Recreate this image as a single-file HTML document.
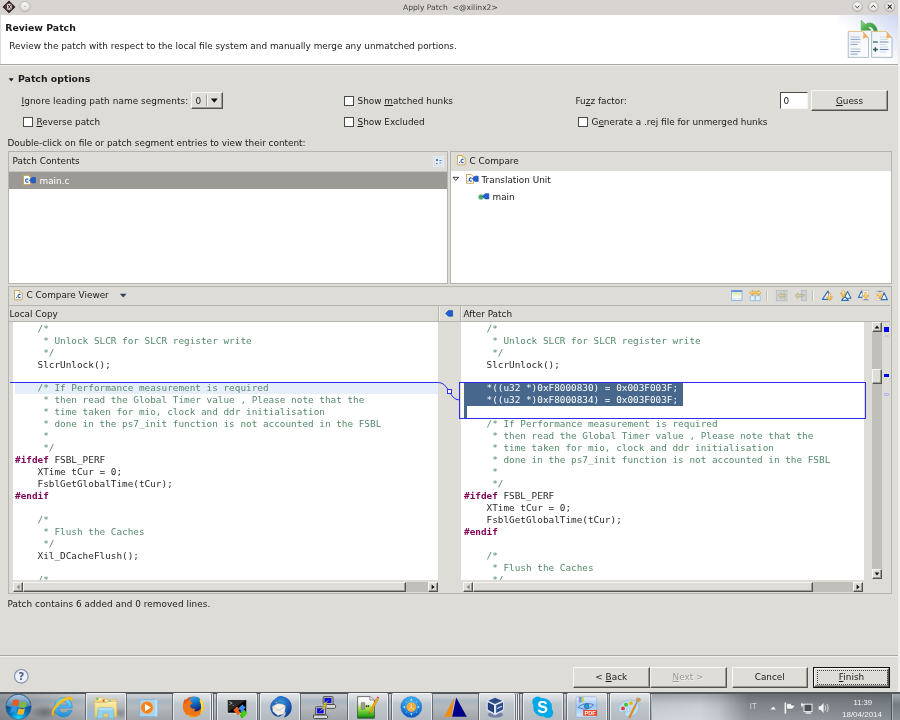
<!DOCTYPE html>
<html><head><meta charset="utf-8"><title>Apply Patch</title>
<style>
*{margin:0;padding:0;box-sizing:border-box}
html,body{width:900px;height:720px;overflow:hidden;background:#dedcd7}
body{position:relative;font-family:"DejaVu Sans","Liberation Sans",sans-serif;font-size:8.9px;color:#1a1a1a;line-height:11px}
.a{position:absolute;white-space:pre}
.b{font-weight:bold;font-size:9.35px}
u{text-decoration:underline;text-underline-offset:1px;text-decoration-thickness:1px}
.cb{position:absolute;width:9.5px;height:9.5px;background:#fff;border:1px solid #4a4a48}
.btn{position:absolute;height:20px;background:#dfddd8;border:1px solid;border-color:#f7f6f4 #55534e #55534e #f7f6f4;text-align:center;line-height:18px;box-shadow:inset -1px -1px 0 #9d9b95}
.pane{position:absolute;border:1px solid #b5b3ad;background:#dedcd7}
.code{position:absolute;font-family:"DejaVu Sans Mono","Liberation Mono",monospace;font-size:9.365px;line-height:11.965px;white-space:pre;color:#2a2a2a;overflow:hidden}
.c{color:#55896c}
.k{color:#7f0055;font-weight:bold}
.sel{background:#47688c;color:#fff;display:inline-block;height:11.965px;padding-right:4.6px}
.hl{position:absolute;background:#e6eefa}
.sbt{position:absolute;background:#c1bfba}
.sbb{position:absolute;background:#dedcd7;border:1px solid;border-color:#f7f6f4 #55534e #55534e #f7f6f4;box-shadow:inset -1px -1px 0 #9d9b95}
#root{position:absolute;left:0;top:0;width:900px;height:720px;will-change:transform;opacity:.999}
</style></head><body><div id="root">
<!-- title bar -->
<div class="a" id="tb" style="left:0;top:0;width:900px;height:15px;background:#d7d4d1"></div>
<div class="a" style="left:403px;top:2.5px;font-size:7.6px;color:#444;line-height:10px">Apply Patch  &lt;@xilinx2&gt;</div>
<!-- header -->
<div class="a" style="left:1px;top:15px;width:897px;height:49px;background:#fff"></div>
<div class="a" style="left:0;top:64px;width:900px;height:1px;background:#a9a7a2"></div>
<div class="a" style="left:0;top:65px;width:900px;height:1px;background:#f0efec"></div>
<div class="a b" style="left:5.2px;top:22.2px">Review Patch</div>
<div class="a" style="left:9.3px;top:41px">Review the patch with respect to the local file system and manually merge any unmatched portions.</div>
<!-- options -->
<div class="a b" style="left:18px;top:73.2px">Patch options</div>
<div class="a" style="left:21.5px;top:96px;letter-spacing:.08px"><u>I</u>gnore leading path name segments:</div>
<div class="cb" style="left:23px;top:117px"></div>
<div class="a" style="left:36.5px;top:117px"><u>R</u>everse patch</div>
<div class="cb" style="left:344px;top:96px"></div>
<div class="a" style="left:357.5px;top:96px">Show <u>m</u>atched hunks</div>
<div class="cb" style="left:344px;top:117px"></div>
<div class="a" style="left:357.5px;top:117px"><u>S</u>how Excluded</div>
<div class="a" style="left:575.5px;top:96px">Fu<u>z</u>z factor:</div>
<div class="cb" style="left:578px;top:117px"></div>
<div class="a" style="left:591.5px;top:117px">G<u>e</u>nerate a .rej file for unmerged hunks</div>
<div class="a" style="left:7.5px;top:138px">Double-click on file or patch segment entries to view their content:</div>
<!-- widgets -->
<svg class="a" style="left:8px;top:76.5px" width="7" height="6" viewBox="0 0 7 6"><path d="M0.7 1.2H5.7L3.2 4.6Z" fill="#1a1a1a"/></svg>
<div class="btn" style="left:191px;top:91.5px;width:31.5px;height:17.5px"></div>
<div class="a" style="left:195.5px;top:96px">0</div>
<div class="a" style="left:206px;top:95px;width:1px;height:11px;background:#a9a7a2"></div>
<div class="a" style="left:207px;top:95px;width:1px;height:11px;background:#f7f6f4"></div>
<svg class="a" style="left:210px;top:98px" width="9" height="6" viewBox="0 0 9 6"><path d="M0.8 0.6H7.8L4.3 4.8Z" fill="#111"/></svg>
<div class="a" style="left:780px;top:92px;width:28px;height:17px;background:#fff;border:1px solid;border-color:#4a4946 #f7f6f4 #f7f6f4 #4a4946"></div>
<div class="a" style="left:783.5px;top:96px">0</div>
<div class="btn" style="left:811px;top:90px;width:77px;height:21px;line-height:20px"><u>G</u>uess</div>
<!-- panes -->
<div class="pane" style="left:8px;top:151px;width:440px;height:133px"></div>
<div class="a" style="left:9px;top:171px;width:438px;height:1px;background:#c5c3be"></div>
<div class="a" style="left:9px;top:171.6px;width:438px;height:17.8px;background:#9c9a94"></div>
<div class="a" style="left:9px;top:189.4px;width:438px;height:93.6px;background:#fff"></div>
<div class="a" style="left:12.5px;top:156px">Patch Contents</div>
<div class="a" style="left:39.5px;top:176px;color:#fff">main.c</div>
<div class="pane" style="left:450px;top:151px;width:441.8px;height:133px"></div>
<div class="a" style="left:451px;top:171px;width:439.8px;height:112px;background:#fff"></div>
<div class="a" style="left:469.5px;top:156px">C Compare</div>
<div class="a" style="left:481.5px;top:175px">Translation Unit</div>
<div class="a" style="left:492.5px;top:192px">main</div>
<!-- title bar icons + header banner -->
<svg class="a" style="left:0;top:0" width="900" height="66" viewBox="0 0 900 66">
<defs>
<radialGradient id="tbtn" cx="0.5" cy="0.3" r="0.75"><stop offset="0" stop-color="#f8f7f6"/><stop offset="0.65" stop-color="#e4e2e0"/><stop offset="1" stop-color="#b4b1ae"/></radialGradient>
<linearGradient id="ban" x1="0" y1="1" x2="1" y2="0"><stop offset="0" stop-color="#e8ecf8" stop-opacity="0"/><stop offset="0.4" stop-color="#e8ecf8" stop-opacity="0"/><stop offset="0.7" stop-color="#e4e9f7" stop-opacity=".85"/><stop offset="1" stop-color="#cbd5ef"/></linearGradient>
<linearGradient id="garrow" x1="0" y1="0" x2="1" y2="1"><stop offset="0" stop-color="#9fdc9a"/><stop offset="0.5" stop-color="#4cae4c"/><stop offset="1" stop-color="#2f8a34"/></linearGradient>
<linearGradient id="pg" x1="0" y1="0" x2="1" y2="1"><stop offset="0" stop-color="#eef2f8"/><stop offset="1" stop-color="#fdfdfe"/></linearGradient>
</defs>
<!-- app icon -->
<path d="M9 1.3L14.6 6.9L9 12.5L3.4 6.9Z" fill="#a81616" stroke="#1a1a1a" stroke-width="1.1"/>
<circle cx="9" cy="6.9" r="3.3" fill="#f0f0f0" stroke="#1a1a1a" stroke-width="0.6"/>
<path d="M6.6 5V8.6M8.2 5L10.6 8.6M10.6 5L8.2 8.6M11.6 6.8H12.4" stroke="#111" stroke-width="0.9" fill="none"/>
<!-- title buttons -->
<circle cx="25" cy="6.5" r="5.2" fill="url(#tbtn)" stroke="#aeaba8" stroke-width="0.7"/>
<path d="M24 6.3H26" stroke="#b0adaa" stroke-width="0.8"/>
<circle cx="857.3" cy="6.7" r="5" fill="url(#tbtn)" stroke="#a8a5a2" stroke-width="0.7"/>
<path d="M855.2 5.8L857.3 7.8L859.4 5.8" stroke="#3a3a3a" stroke-width="1" fill="none"/>
<circle cx="873.3" cy="6.7" r="5" fill="url(#tbtn)" stroke="#a8a5a2" stroke-width="0.7"/>
<path d="M871.2 7.4L873.3 5.4L875.4 7.4" stroke="#3a3a3a" stroke-width="1" fill="none"/>
<circle cx="889.7" cy="6.7" r="5" fill="url(#tbtn)" stroke="#a8a5a2" stroke-width="0.7"/>
<path d="M887.7 4.7L891.7 8.7M891.7 4.7L887.7 8.7" stroke="#2a2a2a" stroke-width="1.1" fill="none"/>
<!-- banner gradient -->
<rect x="838" y="15" width="60" height="49" fill="url(#ban)"/>
<!-- left page -->
<path d="M848.2 31.5H863L868.6 38V57.4H848.2Z" fill="url(#pg)" stroke="#8aa4a6" stroke-width="0.7"/>
<path d="M848.2 31.4H863" stroke="#f2c48c" stroke-width="1"/>
<path d="M863 31.4C863.6 34 863.4 36.6 862.6 38.6C864.6 37.6 866.8 37.4 868.6 38Z" fill="#f4b058"/>
<path d="M850.6 37H860.4M850.6 42H860.4M850.6 49H860.4" stroke="#b4c0d8" stroke-width="1"/>
<path d="M850.6 39.4H860.4M850.6 44.4H857.6M850.6 51.6H860.4M850.6 54.2H857.6" stroke="#7f98c8" stroke-width="0.9"/>
<!-- right page -->
<path d="M871.6 31.5H886.4L892 38V57.4H871.6Z" fill="url(#pg)" stroke="#8aa4a6" stroke-width="0.7"/>
<path d="M871.6 31.4H886.4" stroke="#f2c48c" stroke-width="1"/>
<path d="M886.4 31.4C887 34 886.8 36.6 886 38.6C888 37.6 890.2 37.4 892 38Z" fill="#f4b058"/>
<path d="M873 42H877.8" stroke="#4c8484" stroke-width="1.6"/>
<path d="M873 49.5H877.8M875.4 47.2V51.8" stroke="#2c5c5e" stroke-width="1.5"/>
<path d="M879.8 37H886M879.8 39.5H888M879.8 44.5H886M879.8 47H888M879.8 52H886" stroke="#cdd6e6" stroke-width="0.9"/>
<path d="M879.8 42H888.4" stroke="#8fa2c8" stroke-width="1.3"/>
<path d="M879.8 49.5H888.4" stroke="#5c7cb4" stroke-width="1.1"/>
<!-- green arrow -->
<path d="M861.2 20.2L865.4 24.4C869.6 21.6 875.6 22.6 877.4 30.8H874C873 27.4 870.4 26.2 867.8 27L871 30.2H861.2Z" fill="url(#garrow)" stroke="#3c9a40" stroke-width="0.5"/>
</svg>
<!-- compare viewer -->
<div class="pane" style="left:8px;top:286px;width:883.8px;height:308px"></div>
<div class="a" style="left:9px;top:305px;width:881px;height:1px;background:#b5b3ad"></div>
<div class="a" style="left:9px;top:321px;width:881px;height:1px;background:#b5b3ad"></div>
<div class="a" style="left:26.5px;top:290px">C Compare Viewer</div>
<div class="a" style="left:9.5px;top:309px">Local Copy</div>
<div class="a" style="left:463.5px;top:309px">After Patch</div>
<div class="a" style="left:13px;top:322px;width:425px;height:258px;background:#fff"></div>
<div class="a" style="left:461px;top:322px;width:403px;height:258px;background:#fff"></div>
<div class="hl" style="left:15px;top:383px;width:423px;height:11px"></div>
<div class="code" style="left:15px;top:322.6px;width:423px;height:257.4px"><span class="c">    /*</span>
<span class="c">     * Unlock SLCR for SLCR register write</span>
<span class="c">     */</span>
    SlcrUnlock();

<span class="c">    /* If Performance measurement is required</span>
<span class="c">     * then read the Global Timer value , Please note that the</span>
<span class="c">     * time taken for mio, clock and ddr initialisation</span>
<span class="c">     * done in the ps7_init function is not accounted in the FSBL</span>
<span class="c">     *</span>
<span class="c">     */</span>
<span class="k">#ifdef</span> FSBL_PERF
    XTime tCur = 0;
    FsblGetGlobalTime(tCur);
<span class="k">#endif</span>

<span class="c">    /*</span>
<span class="c">     * Flush the Caches</span>
<span class="c">     */</span>
    Xil_DCacheFlush();

<span class="c">    /*</span></div>
<div class="code" style="left:464px;top:322.6px;width:400px;height:257.4px"><span class="c">    /*</span>
<span class="c">     * Unlock SLCR for SLCR register write</span>
<span class="c">     */</span>
    SlcrUnlock();

<span class="sel">    *((u32 *)0xF8000830) = 0x003F003F;</span>
<span class="sel">    *((u32 *)0xF8000834) = 0x003F003F;</span>

<span class="c">    /* If Performance measurement is required</span>
<span class="c">     * then read the Global Timer value , Please note that the</span>
<span class="c">     * time taken for mio, clock and ddr initialisation</span>
<span class="c">     * done in the ps7_init function is not accounted in the FSBL</span>
<span class="c">     *</span>
<span class="c">     */</span>
<span class="k">#ifdef</span> FSBL_PERF
    XTime tCur = 0;
    FsblGetGlobalTime(tCur);
<span class="k">#endif</span>

<span class="c">    /*</span>
<span class="c">     * Flush the Caches</span>
<span class="c">     */</span></div>
<div class="a" style="left:464px;top:406px;width:3px;height:12px;background:#47688c"></div>
<svg class="a" style="left:0;top:370px" width="900" height="60" viewBox="0 370 900 60" fill="none" stroke="#2a2af0" stroke-width="1">
<path d="M10 382.5H438.5C449 382.5 449 400 459.5 400"/>
<rect x="459.5" y="382.5" width="406" height="36"/>
<rect x="447.5" y="389.5" width="4" height="4" fill="#fff"/>
</svg>
<!-- scrollbars -->
<div class="sbt" style="left:871.5px;top:322px;width:10px;height:257px"></div>
<div class="sbb" style="left:871.5px;top:322px;width:10px;height:10px"></div>
<div class="sbb" style="left:871.5px;top:569px;width:10px;height:10px"></div>
<div class="sbb" style="left:871.5px;top:369px;width:10px;height:15px"></div>
<div class="sbt" style="left:13px;top:582px;width:425px;height:10px"></div>
<div class="sbb" style="left:13px;top:582px;width:10px;height:10px"></div>
<div class="sbb" style="left:428px;top:582px;width:10px;height:10px"></div>
<div class="sbb" style="left:23px;top:582px;width:383px;height:10px"></div>
<div class="sbt" style="left:463px;top:582px;width:400px;height:10px"></div>
<div class="sbb" style="left:463px;top:582px;width:10px;height:10px"></div>
<div class="sbb" style="left:853px;top:582px;width:10px;height:10px"></div>
<div class="sbb" style="left:473px;top:582px;width:340px;height:10px"></div>
<!-- scroll arrows -->
<svg class="a" style="left:0;top:320px" width="900" height="275" viewBox="0 320 900 275">
<path d="M874.6 328.6L877 325.6L879.4 328.6Z" fill="#111"/>
<path d="M874.6 572.6L877 575.6L879.4 572.6Z" fill="#111"/>
<path d="M19.6 584.6L16.6 587L19.6 589.4Z" fill="#8a8883"/>
<path d="M431.6 584.6L434.6 587L431.6 589.4Z" fill="#111"/>
<path d="M469.6 584.6L466.6 587L469.6 589.4Z" fill="#8a8883"/>
<path d="M856.6 584.6L859.6 587L856.6 589.4Z" fill="#111"/>
<path d="M884.5 336H889" stroke="#c9c7c2" stroke-width="1.6"/>
</svg>
<div class="a" style="left:438px;top:306px;width:1px;height:15px;background:#b5b3ad"></div>
<div class="a" style="left:460px;top:306px;width:1px;height:15px;background:#b5b3ad"></div>
<div class="a" style="left:439px;top:306px;width:1px;height:15px;background:#f0efec"></div>
<div class="a" style="left:461px;top:306px;width:1px;height:15px;background:#f0efec"></div>
<!-- overview -->
<div class="a" style="left:884px;top:327px;width:5px;height:5px;background:#0000ff"></div>
<div class="a" style="left:884px;top:374px;width:5px;height:3px;background:#0000ff"></div>
<div class="a" style="left:884px;top:393px;width:5px;height:3px;background:#d8d8ff;border:1px solid #b0b0f0;border-radius:1px"></div>
<div class="a" style="left:7.5px;top:599px;letter-spacing:.058px">Patch contains 6 added and 0 removed lines.</div>
<!-- small icons -->
<!-- main.c icon (left pane) -->
<svg class="a" style="left:23px;top:175px" width="13" height="11" viewBox="0 0 13 11">
<path d="M0.5 0.5H5.5L7.5 2.5V9.5H0.5Z" fill="#fdfdfb" stroke="#c9a95c" stroke-width="1"/>
<path d="M5.3 4.4C4.3 3.5 2.6 4 2.6 5.6C2.6 7.2 4.3 7.6 5.3 6.8" fill="none" stroke="#3b6fb5" stroke-width="1.3"/>
<path d="M6.3 5.2L9 2.6H12.3V7.8H9Z" fill="#1f5fd8" stroke="#123c9a" stroke-width="0.6"/>
</svg>
<!-- header icon left pane -->
<svg class="a" style="left:433px;top:156px" width="11" height="11" viewBox="0 0 11 11">
<rect x="0.5" y="0.5" width="10" height="10" fill="#e4ecf8" stroke="#f8f8f6"/>
<rect x="1" y="1" width="9" height="9" fill="none" stroke="#b8c4d8" stroke-width="0.5"/>
<path d="M3 3L5 5M5 3L3 5M6.5 4.5H8.5M3 7.5H4.5M6.5 7H8" stroke="#4a6aa8" stroke-width="0.9"/>
</svg>
<!-- C Compare icon -->
<svg class="a" style="left:457px;top:155px" width="9" height="11" viewBox="0 0 9 11">
<path d="M0.5 0.5H5.5L8.2 3V9.8H0.5Z" fill="#fdfdfb" stroke="#c9a95c" stroke-width="1"/>
<path d="M5.5 0.5V3H8.2" fill="#f0dca8" stroke="#c9a95c" stroke-width="0.6"/>
<rect x="2" y="7" width="1" height="1" fill="#3b6fb5"/>
<path d="M6.5 4.8C5.6 4 4 4.4 4 6C4 7.6 5.6 8 6.5 7.2" fill="none" stroke="#2a5db0" stroke-width="1.2"/>
</svg>
<!-- tree expander -->
<svg class="a" style="left:452px;top:176px" width="8" height="6" viewBox="0 0 8 6">
<path d="M1 1.3H6.6L3.8 4.5Z" fill="#fff" stroke="#2a2a2a" stroke-width="0.9"/>
</svg>
<!-- translation unit icon -->
<svg class="a" style="left:466px;top:174px" width="13" height="11" viewBox="0 0 13 11">
<path d="M0.5 0.5H5.2L7.5 2.6V9.3H0.5Z" fill="#fdfdfb" stroke="#c9a95c" stroke-width="1"/>
<rect x="1.6" y="6.6" width="1" height="1" fill="#3b6fb5"/>
<path d="M5.6 4.4C4.8 3.6 3.2 4 3.2 5.6C3.2 7.2 4.8 7.5 5.6 6.8" fill="none" stroke="#2a5db0" stroke-width="1.2"/>
<path d="M6.3 4.8L8.8 2.2H12.2V7.4H8.8Z" fill="#1f5fd8" stroke="#123c9a" stroke-width="0.6"/>
</svg>
<!-- main icon -->
<svg class="a" style="left:478px;top:193px" width="12" height="8" viewBox="0 0 12 8">
<circle cx="3" cy="4" r="2.5" fill="#4fa66a" stroke="#7fc494" stroke-width="0.6"/>
<path d="M4.6 3.3L7.2 0.7H10.8V5.9H7.2Z" fill="#1f5fd8" stroke="#123c9a" stroke-width="0.6"/>
</svg>
<!-- viewer title icon -->
<svg class="a" style="left:14px;top:290px" width="9" height="11" viewBox="0 0 9 11">
<path d="M0.5 0.5H5.5L8.2 3V9.8H0.5Z" fill="#fdfdfb" stroke="#c9a95c" stroke-width="1"/>
<path d="M5.5 0.5V3H8.2" fill="#f0dca8" stroke="#c9a95c" stroke-width="0.6"/>
<rect x="2" y="7" width="1" height="1" fill="#3b6fb5"/>
<path d="M6.5 4.8C5.6 4 4 4.4 4 6C4 7.6 5.6 8 6.5 7.2" fill="none" stroke="#2a5db0" stroke-width="1.2"/>
</svg>
<!-- viewer dropdown arrow -->
<svg class="a" style="left:119px;top:293px" width="9" height="6" viewBox="0 0 9 6"><path d="M0.8 0.8H7.6L4.2 4.6Z" fill="#33415e"/></svg>
<!-- center arrow -->
<svg class="a" style="left:445px;top:310px" width="9" height="8" viewBox="0 0 9 8">
<path d="M0.6 3.4L3.4 0.6H7.6V6.2H3.4Z" fill="#1f5fd8" stroke="#123c9a" stroke-width="0.6"/>
</svg>
<!-- viewer toolbar icons -->
<svg class="a" style="left:725px;top:286px" width="166" height="19" viewBox="725 286 166 19">
<defs>
<linearGradient id="gy" x1="0" y1="0" x2="0" y2="1"><stop offset="0" stop-color="#fff2c8"/><stop offset="1" stop-color="#f0b03a"/></linearGradient>
<linearGradient id="gg" x1="0" y1="0" x2="0" y2="1"><stop offset="0" stop-color="#d8eaa0"/><stop offset="1" stop-color="#f8fbe8"/></linearGradient>
</defs>
<!-- 1 window layout -->
<rect x="731.5" y="290.5" width="10.5" height="10" fill="#f4f8fc" stroke="#93b2dc" stroke-width="0.9"/>
<rect x="731.5" y="290.3" width="10.5" height="1.8" fill="#5d92d2"/>
<rect x="732.6" y="292.6" width="8.4" height="4.6" fill="url(#gg)"/>
<path d="M732.8 299H736.2M737.6 299H741" stroke="#b9d3ee" stroke-width="1.2"/>
<!-- 2 two panes with double arrow -->
<rect x="750.3" y="295.8" width="4.6" height="4.8" fill="#e4f2fb" stroke="#9cbfe4" stroke-width="0.9"/>
<rect x="755.6" y="295.8" width="4.6" height="4.8" fill="#e4f2fb" stroke="#9cbfe4" stroke-width="0.9"/>
<path d="M749.6 292.8L752.6 290.2V291.8H758V290.2L761 292.8L758 295.4V293.8H752.6V295.4Z" fill="url(#gy)" stroke="#d9962a" stroke-width="0.7"/>
<!-- sep -->
<path d="M767.5 290.5V301" stroke="#f5f4f1" stroke-width="1"/><path d="M766.6 290.5V301" stroke="#bab8b2" stroke-width="0.8"/>
<!-- 3 disabled copy all -->
<rect x="776.3" y="290.5" width="10.6" height="10.2" fill="#cfd3d2" stroke="#b4bac0" stroke-width="0.8"/>
<rect x="783.6" y="290.5" width="1.4" height="10.2" fill="#b7c9a6"/>
<path d="M778 295.6L781 292.8V294.4H785.2V296.8H781V298.4Z" fill="#d8ccb0" stroke="#b3a684" stroke-width="0.7"/>
<!-- 4 disabled copy current -->
<rect x="801.6" y="290.5" width="4.6" height="10.2" fill="#cdd2d8" stroke="#b4bac0" stroke-width="0.8"/>
<rect x="803.6" y="294.6" width="1.4" height="1.6" fill="#a8c094"/>
<path d="M795 295.6L798 292.8V294.4H803V296.8H798V298.4Z" fill="#d8ccb0" stroke="#b3a684" stroke-width="0.7"/>
<!-- sep -->
<path d="M813.3 290.5V301" stroke="#f5f4f1" stroke-width="1"/><path d="M812.4 290.5V301" stroke="#bab8b2" stroke-width="0.8"/>
<!-- 5 next difference -->
<path d="M828 291.2L822.4 299.4H830.6Z" fill="#eef4fb" stroke="#2f6fb8" stroke-width="1.2" stroke-linejoin="round"/>
<path d="M828.4 293.4H830.6V297H832.6L829.5 300.8L826.2 297H828.4Z" fill="url(#gy)" stroke="#d9962a" stroke-width="0.6"/>
<!-- 6 prev difference -->
<path d="M847.6 291.6L844 298.2H851Z" fill="#eef4fb" stroke="#2f6fb8" stroke-width="1.1" stroke-linejoin="round"/>
<path d="M844.8 296.4L841.6 300.4H848.4Z" fill="#eef4fb" stroke="#2f6fb8" stroke-width="1.1" stroke-linejoin="round"/>
<path d="M842.2 297.2V293.8H840.3L843.3 290.1L846.4 293.8H844.5V297.2Z" fill="url(#gy)" stroke="#d9962a" stroke-width="0.6"/>
<!-- 7 next change -->
<path d="M861.6 291L858.4 297.4H864.4Z" fill="#eef4fb" stroke="#2f6fb8" stroke-width="1.1" stroke-linejoin="round"/>
<rect x="862.8" y="290.4" width="6" height="10.2" fill="#f8f8f6" stroke="#c8c0a8" stroke-width="0.7"/>
<path d="M863.4 299.6H868.2" stroke="#5c8fd0" stroke-width="1"/>
<path d="M864.7 292.4H866.9V295.6H868.8L865.8 299.2L862.7 295.6H864.7Z" fill="url(#gy)" stroke="#d9962a" stroke-width="0.6"/>
<!-- 8 prev change -->
<rect x="877" y="290.4" width="6" height="10.2" fill="#f8f8f6" stroke="#c8c0a8" stroke-width="0.7"/>
<path d="M877.6 291.6H882.4" stroke="#5c8fd0" stroke-width="1"/>
<path d="M884 292.8L881.2 299.6H887.4Z" fill="#eef4fb" stroke="#2f6fb8" stroke-width="1.1" stroke-linejoin="round"/>
<path d="M878.8 299V295.6H876.9L879.9 291.9L883 295.6H881V299Z" fill="url(#gy)" stroke="#d9962a" stroke-width="0.6"/>
</svg>
<!-- bottom -->
<div class="a" style="left:0;top:655px;width:900px;height:1px;background:#a9a7a2"></div>
<div class="a" style="left:0;top:656px;width:900px;height:1px;background:#f3f2ef"></div>
<svg class="a" style="left:13px;top:668px" width="17" height="17" viewBox="0 0 17 17"><circle cx="8.3" cy="8.3" r="6.8" fill="#eef0f5" stroke="#7f90b4" stroke-width="1.1"/><text x="8.3" y="12" font-family="DejaVu Sans, Liberation Sans, sans-serif" font-weight="bold" font-size="10.5" text-anchor="middle" fill="#4c6294">?</text></svg>
<div class="btn" style="left:573px;top:667px;width:76.5px;height:20.5px;line-height:19px">&lt; <u>B</u>ack</div>
<div class="btn" style="left:649.5px;top:667px;width:77px;height:20.5px;line-height:19px;color:#9d9b96;text-shadow:0.7px 0.7px 0 #f4f3f1"><u>N</u>ext &gt;</div>
<div class="btn" style="left:731.5px;top:667px;width:76.5px;height:20.5px;line-height:19px">Cancel</div>
<div class="a" style="left:813px;top:667px;width:77px;height:20.5px;background:#111"></div>
<div class="btn" style="left:814px;top:668px;width:75px;height:18.5px;line-height:17px"><u>F</u>inish</div>
<div class="a" style="left:816.5px;top:669.8px;width:71px;height:15px;border:1px dotted #444"></div>
<div class="a" style="left:898.4px;top:0;width:1.6px;height:693px;background:#eeedeb"></div>
<!-- taskbar -->
<div class="a" id="task" style="left:0;top:692px;width:900px;height:28px;background:linear-gradient(#8a8c8c 0,#54585c .5px,#54585c 1.5px,#cdd0d3 1.7px,#c4c8cc 5px,#a9b7c2 8.5px,#adb7bf 11px,#b6babe 15px,#abafb3 21px,#9fa3a7 28px)"></div>
<div class="a" style="left:0;top:694px;width:86px;height:26px;background:linear-gradient(90deg,rgba(80,82,86,.42),rgba(80,82,86,.25) 45%,rgba(80,82,86,.0))"></div>
<div class="a" style="left:652px;top:694px;width:239px;height:26px;background:linear-gradient(rgba(0,0,0,.2),rgba(0,0,0,.04) 40%,rgba(0,0,0,0) 60%,rgba(255,255,255,.12)),linear-gradient(90deg,#c6ccd2 0,#ccd2d8 20%,#bcc2c8 28%,#858b91 40%,#7d8389 100%)"></div>
<div class="a" style="left:30px;top:705px;width:30px;height:14px;border-radius:50%;background:radial-gradient(closest-side,rgba(40,40,40,.38),rgba(40,40,40,0))"></div>
<div class="a" style="left:891px;top:694px;width:9px;height:26px;background:linear-gradient(#a4acb2,#757d83 40%,#8a9298);border-left:1px solid #4e565c;box-shadow:inset 1px 0 0 rgba(255,255,255,.35)"></div>
<div class="a" style="left:84.5px;top:693.4px;width:42.0px;height:29px;border:1px solid rgba(80,86,92,.8);border-top:0;border-radius:2px;background:radial-gradient(ellipse 9px 7px at 15% 75%,rgba(120,190,240,.55),rgba(120,190,240,0)),radial-gradient(ellipse 8px 6px at 86% 72%,rgba(60,60,60,.35),rgba(60,60,60,0)),linear-gradient(#dfe1e3,#c8ccd0 22%,#b4b9be 45%,#a9aeb3 100%);box-shadow:inset 0 0 0 1px rgba(255,255,255,.65)"></div>
<div class="a" style="left:172.0px;top:693.4px;width:42.0px;height:29px;border:1px solid rgba(80,86,92,.8);border-top:0;border-radius:2px;background:#c8cdd2;box-shadow:inset 0 0 0 1px rgba(255,255,255,.65)"></div>
<div class="a" style="left:172.0px;top:693.4px;width:40.0px;height:29px;border:1px solid rgba(80,86,92,.8);border-top:0;border-radius:2px;background:linear-gradient(#e6e8ea,#d6dade 20%,#c0c8cf 38%,#bcc3c9 60%,#b4babf 100%);box-shadow:inset 0 0 0 1px rgba(255,255,255,.65)"></div>
<div class="a" style="left:215.7px;top:693.4px;width:42.0px;height:29px;border:1px solid rgba(80,86,92,.8);border-top:0;border-radius:2px;background:linear-gradient(#e6e8ea,#d6dade 20%,#c0c8cf 38%,#bcc3c9 60%,#b4babf 100%);box-shadow:inset 0 0 0 1px rgba(255,255,255,.65)"></div>
<div class="a" style="left:259.4px;top:693.4px;width:42.0px;height:29px;border:1px solid rgba(80,86,92,.8);border-top:0;border-radius:2px;background:linear-gradient(#e6e8ea,#d6dade 20%,#c0c8cf 38%,#bcc3c9 60%,#b4babf 100%);box-shadow:inset 0 0 0 1px rgba(255,255,255,.65)"></div>
<div class="a" style="left:346.9px;top:693.4px;width:42.0px;height:29px;border:1px solid rgba(80,86,92,.8);border-top:0;border-radius:2px;background:linear-gradient(#e6e8ea,#d6dade 20%,#c0c8cf 38%,#bcc3c9 60%,#b4babf 100%);box-shadow:inset 0 0 0 1px rgba(255,255,255,.65)"></div>
<div class="a" style="left:390.6px;top:693.4px;width:42.0px;height:29px;border:1px solid rgba(80,86,92,.8);border-top:0;border-radius:2px;background:linear-gradient(#e6e8ea,#d6dade 20%,#c0c8cf 38%,#bcc3c9 60%,#b4babf 100%);box-shadow:inset 0 0 0 1px rgba(255,255,255,.65)"></div>
<div class="a" style="left:478.1px;top:693.4px;width:42.0px;height:29px;border:1px solid rgba(80,86,92,.8);border-top:0;border-radius:2px;background:#c8cdd2;box-shadow:inset 0 0 0 1px rgba(255,255,255,.65)"></div>
<div class="a" style="left:478.1px;top:693.4px;width:40.0px;height:29px;border:1px solid rgba(80,86,92,.8);border-top:0;border-radius:2px;background:#c8cdd2;box-shadow:inset 0 0 0 1px rgba(255,255,255,.65)"></div>
<div class="a" style="left:478.1px;top:693.4px;width:38.0px;height:29px;border:1px solid rgba(80,86,92,.8);border-top:0;border-radius:2px;background:linear-gradient(#e6e8ea,#d6dade 20%,#c0c8cf 38%,#bcc3c9 60%,#b4babf 100%);box-shadow:inset 0 0 0 1px rgba(255,255,255,.65)"></div>
<div class="a" style="left:521.8px;top:693.4px;width:42.0px;height:29px;border:1px solid rgba(80,86,92,.8);border-top:0;border-radius:2px;background:linear-gradient(#e6e8ea,#d6dade 20%,#c0c8cf 38%,#bcc3c9 60%,#b4babf 100%);box-shadow:inset 0 0 0 1px rgba(255,255,255,.65)"></div>
<div class="a" style="left:565.5px;top:693.4px;width:42.0px;height:29px;border:1px solid rgba(80,86,92,.8);border-top:0;border-radius:2px;background:linear-gradient(#e6e8ea,#d6dade 20%,#c0c8cf 38%,#bcc3c9 60%,#b4babf 100%);box-shadow:inset 0 0 0 1px rgba(255,255,255,.65)"></div>
<div class="a" style="left:609.3px;top:693.4px;width:42.0px;height:29px;border:1px solid rgba(80,86,92,.8);border-top:0;border-radius:2px;background:linear-gradient(#e6e8ea,#d6dade 20%,#c0c8cf 38%,#bcc3c9 60%,#b4babf 100%);box-shadow:inset 0 0 0 1px rgba(255,255,255,.65)"></div>
<svg class="a" style="left:0;top:692px" width="900" height="28" viewBox="0 692 900 28">
<defs>
<radialGradient id="orb" cx="0.5" cy="0.95" r="0.9"><stop offset="0" stop-color="#18e0ff"/><stop offset="0.35" stop-color="#0b7fc4"/><stop offset="0.7" stop-color="#0a4f8c"/><stop offset="1" stop-color="#2a5f92"/></radialGradient>
<linearGradient id="orbg" x1="0" y1="0" x2="0" y2="1"><stop offset="0" stop-color="#c8dcee" stop-opacity=".85"/><stop offset="1" stop-color="#7fa6cc" stop-opacity=".55"/></linearGradient>
<linearGradient id="ieb" x1="0" y1="0" x2="0" y2="1"><stop offset="0" stop-color="#7fdcff"/><stop offset="1" stop-color="#1a8fdc"/></linearGradient>
<linearGradient id="fold" x1="0" y1="0" x2="0" y2="1"><stop offset="0" stop-color="#fbeeb0"/><stop offset="1" stop-color="#ecc860"/></linearGradient>
<linearGradient id="npp" x1="0" y1="0" x2="0" y2="1"><stop offset="0" stop-color="#ffffff"/><stop offset="0.3" stop-color="#f0f4f0"/><stop offset="0.5" stop-color="#b8e858"/><stop offset="0.85" stop-color="#38b020"/><stop offset="1" stop-color="#0a7a08"/></linearGradient>
<linearGradient id="bluec" x1="0" y1="0" x2="0" y2="1"><stop offset="0" stop-color="#38b0ec"/><stop offset="1" stop-color="#0a58c4"/></linearGradient>
<linearGradient id="pdfb" x1="0" y1="0" x2="0" y2="1"><stop offset="0" stop-color="#e4ecfa"/><stop offset="0.45" stop-color="#9cc8f4"/><stop offset="1" stop-color="#d0e6fa"/></linearGradient>
<radialGradient id="ffo" cx="0.4" cy="0.8" r="0.8"><stop offset="0" stop-color="#ffb020"/><stop offset="0.6" stop-color="#f06a10"/><stop offset="1" stop-color="#d8400c"/></radialGradient>
<radialGradient id="tbb" cx="0.45" cy="0.3" r="0.8"><stop offset="0" stop-color="#3f9ae0"/><stop offset="0.6" stop-color="#1a58b4"/><stop offset="1" stop-color="#0a2a78"/></radialGradient>
<linearGradient id="ffg" x1="0" y1="0" x2="0.3" y2="1"><stop offset="0" stop-color="#38b4f0"/><stop offset="0.5" stop-color="#1a70c8"/><stop offset="1" stop-color="#0a2478"/></linearGradient>
</defs>
<!-- start orb -->
<circle cx="18.5" cy="706.8" r="12.7" fill="url(#orb)" stroke="#3a6a96" stroke-width="0.8"/>
<path d="M6.2 705.5A12.4 12.4 0 0 1 30.8 705.5C24 708.5 13 708.5 6.2 705.5Z" fill="url(#orbg)"/>
<path d="M13 700.2C15 699.2 17.2 699.2 19.2 700.4L17.8 706C15.8 705 13.8 705 11.8 706Z" fill="#ea5a1c"/>
<path d="M20.4 701.2C22.4 702.4 24.6 702.4 26.8 701.6L25.4 707.2C23.2 708 21 708 19 706.8Z" fill="#7fba3c"/>
<path d="M11.4 707.4C13.4 706.4 15.4 706.4 17.4 707.4L16 713C14 712 12 712 10 713Z" fill="#2f95e0"/>
<path d="M18.6 708.2C20.6 709.4 22.8 709.4 25 708.6L23.6 714.2C21.4 715 19.2 715 17.2 713.8Z" fill="#f8b226"/>
<!-- IE -->
<g>
<path d="M63.4 697.8C68.6 697.8 72.4 701.6 72.2 708H58.8C59 711 61 713 63.8 713C65.8 713 67.4 712 68.2 710.6H72C70.8 714.4 67.6 716.8 63.6 716.8C58.2 716.8 54.2 712.8 54.2 707.4C54.2 701.8 58.2 697.8 63.4 697.8ZM58.9 705.2H67.8C67.4 702.8 65.8 701.4 63.4 701.4C61 701.4 59.4 702.8 58.9 705.2Z" fill="url(#ieb)" stroke="#1a7fcc" stroke-width="0.5"/>
<path d="M52.6 715.4C50.4 712.6 53.6 706 59.6 701.2C64.6 697.2 70.2 695.8 71.8 697.6C72.6 698.6 72.4 700 71.8 701.4C71.6 699.6 70.2 698.4 66.4 700C62.2 701.8 57.6 705.6 55 709.6C53.2 712.4 53 714.4 54.4 715.6Z" fill="#f8c41a" stroke="#e8a810" stroke-width="0.4"/>
</g>
<!-- Explorer folder -->
<g>
<ellipse cx="102" cy="713" rx="10" ry="5" fill="#7fc8f0" opacity=".45"/>
<path d="M95 699.4L96.2 697.8H104L105 699.4H116.4V702H95Z" fill="#f4dc8c" stroke="#d8b850" stroke-width="0.5"/>
<rect x="96.2" y="698.2" width="2.4" height="1.6" rx=".8" fill="#18c030"/>
<rect x="99" y="698.6" width="2.6" height="1" fill="#fff"/>
<rect x="102.6" y="699.6" width="2" height="2" fill="#d84020"/>
<rect x="104.8" y="700" width="2.4" height="1" fill="#fff"/>
<ellipse cx="109.8" cy="701.6" rx="1.6" ry="1.1" fill="#1e90f4"/>
<rect x="111.2" y="701.6" width="3" height="1" fill="#fff"/>
<path d="M94.6 702.6H107L108 701.4H116.8V717H94.6Z" fill="url(#fold)" stroke="#d8b44c" stroke-width="0.5"/>
<path d="M98 709.4C98 708.4 98.8 707.8 99.6 707.8H111.6C112.6 707.8 113.2 708.6 113.2 709.4L114.2 718.4H108.6L108.2 713.2H103.2L102.8 718.4H97.2Z" fill="#8fd0ee" stroke="#5aaedc" stroke-width="0.5"/>
<path d="M98.6 709H112.6" stroke="#c8ecfa" stroke-width="1.2"/>
</g>
<!-- Media player -->
<g>
<path d="M139.6 699.8L156 699.4L158 701V715L156 716.6H139.6Z" fill="#a8d4f0" stroke="#6fb0dc" stroke-width="0.6"/>
<path d="M156 699.4V716.6" stroke="#d8ecf8" stroke-width="1"/>
<circle cx="147" cy="707.6" r="6.2" fill="#f4821c" stroke="#fbb060" stroke-width="0.8"/>
<path d="M145 704L151 707.6L145 711.2Z" fill="#fff"/>
</g>
<!-- Firefox -->
<g>
<circle cx="193.2" cy="706.9" r="10.4" fill="url(#ffo)"/>
<circle cx="194.8" cy="704.2" r="7.6" fill="url(#ffg)"/>
<path d="M184.2 699.4L186.6 701L189 700.4L190.8 699.2L190.8 701.6L192.8 703.2L190.8 704.2L190 706C190.4 708 192.4 709.2 195.2 708.4C195.4 709.4 194.6 710.6 193.4 711C195 712.2 197.6 712 199.4 710.6L200.6 712.6L194 716L186 714L183 707Z" fill="#f07418"/>
<path d="M184.2 699.4L186.6 701L185.2 704L183.6 703Z" fill="#e85a14"/>
<path d="M199.8 698.6C203.2 700.6 204.6 705 203.4 709.6C202.6 712.2 201.2 713.8 199.6 714.8C201.6 711 202 705.4 199.8 701.8Z" fill="#ffd828"/>
<path d="M200.4 701C201.6 703 201.8 706.6 201 709.6C202.6 706.6 202.4 703 200.4 701Z" fill="#fff49a"/>
</g>
<!-- Terminal -->
<g>
<rect x="226.6" y="699.2" width="20.4" height="14.6" fill="#e8eaec" stroke="#c0c4c8" stroke-width="0.5"/>
<rect x="227.6" y="700" width="18.6" height="12.6" fill="#2a2a2a"/>
<path d="M227.6 712.6L246.2 700V712.6Z" fill="#000"/>
<path d="M229.4 701.8L232.2 703.2L229.4 704.6" stroke="#b0b0b0" stroke-width="0.9" fill="none"/>
<path d="M232.6 705.4H234" stroke="#909090" stroke-width="0.8"/>
<path d="M233.2 710L237 706.6L239.6 709.2L238.4 710.4L240.6 712.6L238 715.2Z" fill="#f0601c"/>
<path d="M238.2 708.4L242.4 704.6L245.6 707.6L243.6 709.6L244.8 710.8L242.4 713.2L240.2 711.2L241 710.4Z" fill="#3a8cf0"/>
<path d="M239.6 714.6L244.4 710L247.6 713.2L242.2 718.4Z" fill="#48d010"/>
<path d="M239.6 714.6L242.2 718.4L242.4 716.4Z" fill="#2a9a08"/>
</g>
<!-- Thunderbird -->
<g>
<path d="M278 696.6C280 695.6 283 696 286 697.6C290.6 700 292.6 705 291.4 710C290.4 714 287 717 283.6 717.6C285.6 715.6 286 713.6 285.6 712L280 716.6C275 717.4 271 713.4 270.4 708.6C270 704.6 272 700.4 275.6 698.8Z" fill="url(#tbb)"/>
<path d="M275.4 698.6C277.4 697.2 280 696.8 282 697.6C279.6 698.6 278 700 277.6 702C279.6 701.4 282 702 283.8 703.4C281 703.2 278.6 704 277.2 705.8L274.6 703.6Z" fill="#2a78d0"/>
<circle cx="276.4" cy="702.4" r=".8" fill="#f0a020"/>
<path d="M272.4 706.4L277.6 703.8C280 703.4 283.4 704.2 285.4 706L284.4 713.6L277.8 715.4L273 711.6Z" fill="#f4f0e8" stroke="#c8c0b0" stroke-width="0.4"/>
<path d="M272.6 706.6L279 710.4L285.2 706.2" fill="none" stroke="#b8b0a0" stroke-width="0.6"/>
<path d="M273.2 711.4L279 710.4L284.2 713.4" fill="none" stroke="#d0c8b8" stroke-width="0.5"/>
</g>
<!-- PuTTY -->
<g stroke="#1a1a1a" stroke-width="0.7">
<path d="M326 704.4H334.4L335.6 705.6V707.6L334.4 708.4H326.8L325.6 707.2Z" fill="#d8d8d8"/>
<rect x="323.2" y="696.6" width="9.8" height="7.8" rx=".8" fill="#d0d0d0"/>
<rect x="324.6" y="698" width="6.6" height="5" fill="#0808f0" stroke="#404080" stroke-width="0.4"/>
<path d="M313.6 715H326.4L327.6 716V717.8L326.4 718.6H314.6L313.4 717.6Z" fill="#d8d8d8"/>
<rect x="315.6" y="706.8" width="9.8" height="7.8" rx=".8" fill="#d0d0d0"/>
<rect x="317" y="708.2" width="6.6" height="5" fill="#0808f0" stroke="#404080" stroke-width="0.4"/>
<path d="M329 699.8L323.4 704L326.6 704.6L319.2 711.8L326 707L323.2 706.2Z" fill="#f8f010" stroke="#a8a000" stroke-width="0.3"/>
</g>
<!-- Notepad++ -->
<g>
<path d="M357.6 696.6H369.8L374.4 700V718.2H357.6Z" fill="url(#npp)" stroke="#3a3a3a" stroke-width="0.7"/>
<path d="M369.8 696.6V700H374.4" fill="#e8e8e8" stroke="#3a3a3a" stroke-width="0.5"/>
<rect x="361.2" y="702.4" width="3.6" height="7" rx=".8" fill="#9a9a9a" stroke="#5a5a5a" stroke-width="0.4"/>
<path d="M365.6 706.2H369.4M366.5 705.2V707.2M368.5 705.2V707.2" stroke="#2a2a2a" stroke-width="0.8"/>
<path d="M376.2 698.4L378.4 699.6L370.4 713L369 714L369 712.2Z" fill="#f0a418" stroke="#c07808" stroke-width="0.4"/>
<path d="M376.6 697.6L377.6 696.4L379.2 697.4L378.6 698.8Z" fill="#e03030"/>
<path d="M369 714L369.2 712.4L370.2 713Z" fill="#3a2a1a"/>
</g>
<!-- blue compass -->
<g>
<circle cx="411.3" cy="707" r="10.5" fill="url(#bluec)" stroke="#1a60b8" stroke-width="0.4"/>
<circle cx="411.3" cy="707" r="6.2" fill="none" stroke="#8fd0f8" stroke-width="0.5" opacity=".8"/>
<path d="M411.3 698.6L412.5 700.6H410.1ZM411.3 715.4L412.5 713.4H410.1ZM402.9 707L404.9 705.8V708.2ZM419.7 707L417.7 705.8V708.2Z" fill="#d8f0ff"/>
<path d="M405.6 701.3L407 701.7L406 702.7ZM417 701.3L416.6 702.7L415.6 701.7ZM405.6 712.7L406 711.3L407 712.3ZM417 712.7L415.6 712.3L416.6 711.3Z" fill="#b8e0fa"/>
<circle cx="411.3" cy="707" r="4.6" fill="#f8a830" stroke="#fcc870" stroke-width="0.5"/>
<path d="M411.3 703.6V707.4L408.6 709.6M411.3 707.4L414 709.6" stroke="#fff0d8" stroke-width="0.8" fill="none"/>
</g>
<!-- matlab-like triangles -->
<path d="M454.6 697.4L451.2 716.8H444Z" fill="#f08c10"/>
<path d="M456.2 697.4L466.8 716.8H452.2Z" fill="#000088"/>
<!-- VirtualBox -->
<g>
<ellipse cx="495.4" cy="714.6" rx="7.6" ry="3" fill="#3a4a8a" opacity=".55"/>
<path d="M495 696.6L504 700.6V710.2L495 715.2L486.6 710.2V700.6Z" fill="#e4e6f6" stroke="#c8cce8" stroke-width="0.5"/>
<path d="M495 697.8L502.2 700.8L495 704L488.2 700.8Z" fill="#2a4a80"/>
<path d="M487.8 702.2L494 705.2V713L487.8 709.4Z" fill="#1c3a74"/>
<path d="M496.2 705.2L503 702.2V709.4L496.2 713Z" fill="#2c4c88"/>
<path d="M497.2 708.6L502 706.2" stroke="#d0d8f0" stroke-width="1.1"/>
<path d="M489 705.4L493 707.4M489 707.6L493 709.6" stroke="#3a5a98" stroke-width="0.6"/>
</g>
<!-- Skype -->
<g>
<circle cx="542.6" cy="707.2" r="9.3" fill="#00a8e8"/>
<circle cx="537.6" cy="702" r="5.4" fill="#00a8e8"/>
<circle cx="547.8" cy="712.6" r="5.4" fill="#00a8e8"/>
<text x="542.6" y="713" font-family="Liberation Sans, sans-serif" font-weight="bold" font-size="16" text-anchor="middle" fill="#fff">S</text>
</g>
<!-- PDF-XChange -->
<g>
<rect x="576" y="696.8" width="20.8" height="20.4" rx="1.6" fill="url(#pdfb)" stroke="#7a9cc8" stroke-width="0.5"/>
<rect x="578.8" y="697" width="1" height="5.4" fill="#c060e0"/><rect x="579.8" y="697" width="1" height="5.4" fill="#5080f0"/><rect x="580.8" y="697" width="1" height="5.4" fill="#30c8a0"/><rect x="581.8" y="697" width="1" height="5.4" fill="#a0e040"/><rect x="582.8" y="697" width="1" height="5.4" fill="#f8c020"/>
<path d="M578.4 707.6C581 703.6 588 702.6 593.4 704.6C591.4 708.6 585 710 582 708.6C581 708.2 580 707.8 578.4 707.6Z" fill="#a8c8ec" stroke="#2a5ab8" stroke-width="0.7"/>
<circle cx="586.6" cy="706.2" r="2.4" fill="#20a0d8" stroke="#184890" stroke-width="0.5"/>
<rect x="583.2" y="710" width="13.8" height="5.8" fill="#f04020"/>
<text x="590.1" y="715" font-family="Liberation Sans, sans-serif" font-weight="bold" font-size="5.6" text-anchor="middle" fill="#fff">PDF</text>
</g>
<!-- Paint -->
<g>
<path d="M619 711C617.4 706.6 621.6 701.6 628 700.4C634.4 699.2 639.4 702.4 638.8 707.6C638.2 712.8 632.8 716.8 628 716.4C624.6 716.2 624.4 713.6 625.4 712.4C626 711.6 625.2 710.6 624 711.2C622.2 712.2 619.8 713 619 711Z" fill="#bfe0f4" stroke="#88bce0" stroke-width="0.6"/>
<circle cx="623" cy="708.4" r="1.9" fill="#e83830"/>
<circle cx="626" cy="704.8" r="2" fill="#48c030"/>
<circle cx="631" cy="703.2" r="2" fill="#f8b418"/>
<ellipse cx="628.4" cy="709.8" rx="1.4" ry="1.8" fill="#e8f4fc" stroke="#7aa8d0" stroke-width="0.6"/>
<path d="M629.2 718.4L628.8 716.4L634.6 705L636.2 705.8L630.4 717.4Z" fill="#f08818" stroke="#c86808" stroke-width="0.3"/>
<path d="M634.6 705L636.4 701.4L637.6 702L636.2 705.8Z" fill="#8a9098"/>
<path d="M636.2 701.6C635.6 699.6 636.4 698.2 637.6 697.6C639 697.8 640.4 698.4 641 699.4C640.6 700.8 639.2 702 637.6 702.2Z" fill="#c89858"/>
</g>
<!-- tray -->
<g>
<text x="749.8" y="708.8" font-family="Liberation Sans, sans-serif" font-size="9" fill="#d4d8d6" textLength="6.8" lengthAdjust="spacingAndGlyphs">IT</text>
<path d="M770.4 709.4L773.2 706.6L776 709.4Z" fill="#f4f4f4"/>
<path d="M785.4 702.6V713.6" stroke="#f4f4f4" stroke-width="1.6"/>
<path d="M786.6 703.6H792.2L791.2 705L795.4 705.4L792.4 709H786.6Z" fill="#f4f4f4" stroke="#40464c" stroke-width="0.4"/>
<rect x="804" y="704.2" width="8" height="7.4" fill="#4a5056" stroke="#f0f0f0" stroke-width="1"/>
<path d="M805.6 713H810.8" stroke="#f0f0f0" stroke-width="1.4"/>
<path d="M802 703V707M801 704.6H804" stroke="#f0f0f0" stroke-width="1.2"/>
<path d="M818.6 706.2H820.6L823.6 703V713L820.6 709.8H818.6Z" fill="#f4f4f4"/>
<path d="M825 705.4C826 706.8 826 709.2 825 710.6M826.8 703.8C828.6 706 828.6 710 826.8 712.2" stroke="#f0f0f0" stroke-width="0.8" fill="none"/>
<text x="862.8" y="705" font-family="Liberation Sans, sans-serif" font-size="7.8" fill="#f4f4f4" text-anchor="middle" textLength="18.6" lengthAdjust="spacingAndGlyphs">11:39</text>
<text x="862" y="716.6" font-family="Liberation Sans, sans-serif" font-size="7.8" fill="#f4f4f4" text-anchor="middle" textLength="40" lengthAdjust="spacingAndGlyphs">18/04/2014</text>
</g>
</svg>
</div></body></html>
